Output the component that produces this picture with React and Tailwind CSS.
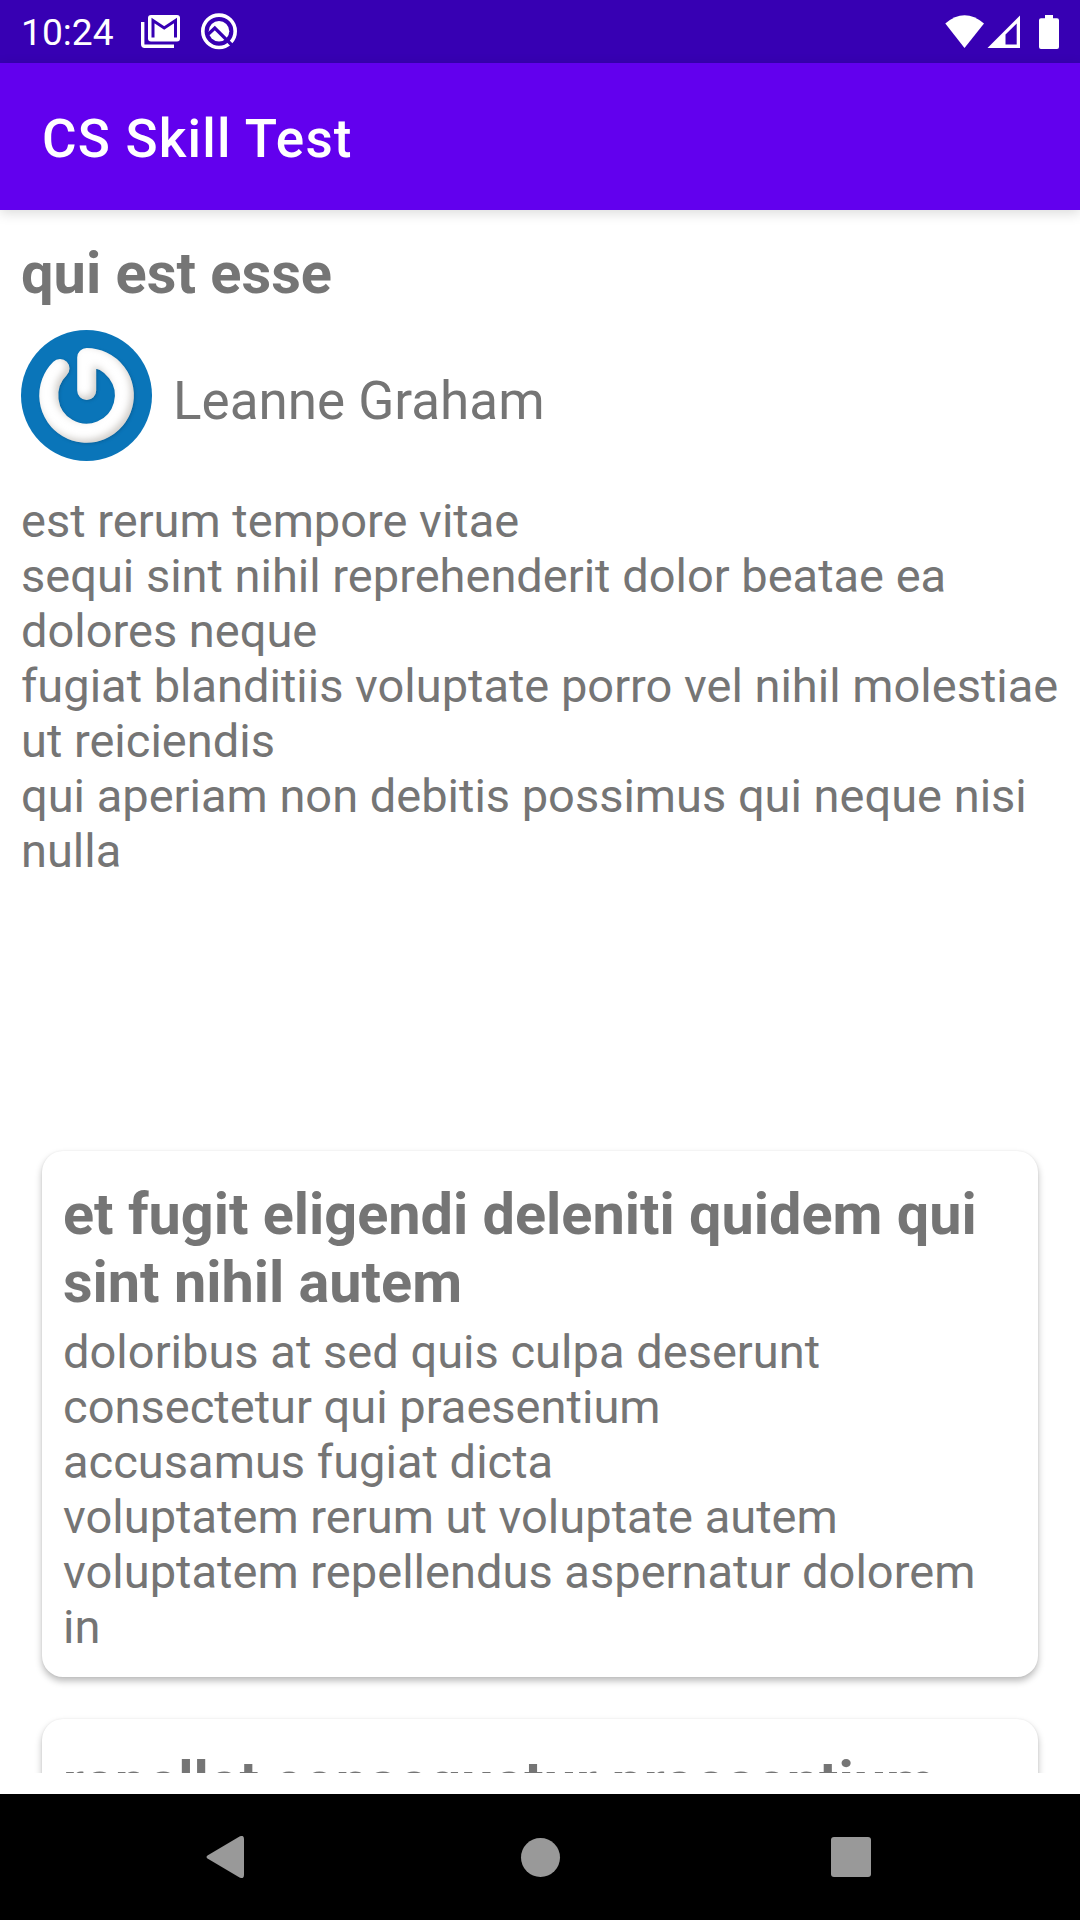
const postLines = [
  'est rerum tempore vitae',
  'sequi sint nihil reprehenderit dolor beatae ea',
  'dolores neque',
  'fugiat blanditiis voluptate porro vel nihil molestiae',
  'ut reiciendis',
  'qui aperiam non debitis possimus qui neque nisi',
  'nulla',
];

const relatedPosts = [
  {
    title: ['et fugit eligendi deleniti quidem qui', 'sint nihil autem'],
    body: [
      'doloribus at sed quis culpa deserunt',
      'consectetur qui praesentium',
      'accusamus fugiat dicta',
      'voluptatem rerum ut voluptate autem',
      'voluptatem repellendus aspernatur dolorem',
      'in',
    ],
  },
  { title: ['repellat consequatur praesentium'], body: [] },
];

function Lines({ lines }) {
  return lines.map((line) => (
    <span key={line} className="block whitespace-nowrap">
      {line}
    </span>
  ));
}

function StatusBar() {
  return (
    <div className="flex h-[63px] shrink-0 items-center bg-[#3700b3] px-[21px] text-white">
      <span className="w-[120px] pt-[2px] text-[37.2px] leading-[43px]">10:24</span>
      <svg className="h-[34px] w-[40px]" viewBox="141 15 40 34">
        <path d="M142.700 22v22.300q0 2 2 2H174" fill="none" stroke="#fff" strokeWidth="3.400" />
        <rect x="148" y="15" width="32" height="26.500" rx="3" fill="#fff" />
        <path d="M153 37.500V20.500l11.200 7.500 11.300-7.500V37.500" fill="none" stroke="#3700b3" strokeWidth="3" />
      </svg>
      <svg className="ml-[20px] h-[37px] w-[37px]" viewBox="201 13 37 37">
        <circle cx="219" cy="31.300" r="16.200" fill="none" stroke="#fff" strokeWidth="3.600" />
        <circle cx="219" cy="31.300" r="10.300" fill="#fff" />
        <path d="M208.500 34l6.300-6 18 18" fill="none" stroke="#3700b3" strokeWidth="3.200" />
      </svg>
      <svg className="ml-auto h-[34px] w-[114px]" viewBox="945 14 114 34" fill="#fff">
        <path d="M945.300 22.500Q964.500 6 984 22.500L964.500 47z" />
        <path fillRule="evenodd" d="M1020 14.500V47h-32.500zM1016.700 22.500L1005.500 33.500V43.500H1016.700z" />
        <path d="M1045 14h8v3.300h4q2 0 2 2V46q0 2-2 2h-16q-2 0-2-2V19.300q0-2 2-2h4z" />
      </svg>
    </div>
  );
}

function Avatar() {
  return (
    <svg className="size-[131px] shrink-0" viewBox="0 0 131 131">
      <defs>
        <filter id="bevel" x="-20%" y="-20%" width="140%" height="140%" colorInterpolationFilters="sRGB">
          <feGaussianBlur in="SourceAlpha" stdDeviation="3.500" result="soft" />
          <feOffset in="soft" dx="-3" dy="-3" result="shifted" />
          <feComposite in="SourceAlpha" in2="shifted" operator="out" result="edge" />
          <feFlood floodColor="#8a8378" floodOpacity="0.4" />
          <feComposite in2="edge" operator="in" result="shade" />
          <feGaussianBlur in="SourceAlpha" stdDeviation="1.500" result="halo" />
          <feOffset in="halo" dx="1" dy="1" result="haloShifted" />
          <feFlood floodColor="#063f68" floodOpacity="0.35" />
          <feComposite in2="haloShifted" operator="in" result="drop" />
          <feMerge>
            <feMergeNode in="drop" />
            <feMergeNode in="SourceGraphic" />
            <feMergeNode in="shade" />
          </feMerge>
        </filter>
      </defs>
      <circle cx="65.500" cy="65.500" r="65.500" fill="#0a75b9" />
      <path
        d="M39 38.500A37.800 37.800 0 1 0 65.700 27.600V60.500"
        fill="none"
        stroke="#fff"
        strokeWidth="19"
        strokeLinecap="round"
        strokeLinejoin="round"
        filter="url(#bevel)"
      />
    </svg>
  );
}

function PostCard({ title, body }) {
  return (
    <article className="min-h-[526px] shrink-0 rounded-[21px] bg-white px-[21px] pb-[22px] pt-[30px] shadow-[0_4px_7px_rgba(0,0,0,0.27),0_0_2px_rgba(0,0,0,0.07)]">
      <h2 className="text-[57.6px] font-bold leading-[68px]">
        <Lines lines={title} />
      </h2>
      <p className="mt-[7px] text-[47.05px] leading-[55px]">
        <Lines lines={body} />
      </p>
    </article>
  );
}

function NavigationBar() {
  return (
    <nav className="flex h-[126px] shrink-0 items-center bg-black pl-[206px] pr-[209px]">
      <div className="flex w-full items-center justify-between">
        <svg className="h-[42px] w-[38px]" viewBox="0 0 38 42">
          <path d="M1.500 19.500L33.500.5Q38-1.500 38 3V39Q38 43.500 33.500 41.500L1.500 22.500Q-.5 21 1.500 19.500z" fill="#999" />
        </svg>
        <div className="mr-[-6px] size-[39px] rounded-full bg-[#999]" />
        <div className="size-[40px] rounded-[3px] bg-[#999]" />
      </div>
    </nav>
  );
}

export default function App() {
  return (
    <div className="flex h-[1920px] w-[1080px] flex-col overflow-hidden bg-white font-['Roboto',sans-serif] text-[#757575]">
      <StatusBar />
      <header className="relative flex h-[147px] shrink-0 items-center bg-[#6200ee] pl-[42px] pt-[5px] shadow-[0_3px_12px_rgba(0,0,0,0.15)]">
        <h1 className="text-[53px] font-medium leading-[62px] tracking-[0.0225em] text-white">CS Skill Test</h1>
      </header>
      <main className="flex h-[1563px] shrink-0 flex-col overflow-hidden">
        <section className="h-[920px] shrink-0 px-[21px] pt-[29px]">
          <h2 className="text-[57.75px] font-bold leading-[68px]">qui est esse</h2>
          <div className="mt-[23px] flex items-center">
            <Avatar />
            <span className="ml-[21px] mt-[10px] text-[53px] leading-[62px]">Leanne Graham</span>
          </div>
          <p className="mt-[32px] text-[47px] leading-[55px]">
            <Lines lines={postLines} />
          </p>
        </section>
        <section className="flex min-h-0 flex-1 flex-col gap-[42px] overflow-hidden px-[42px] pt-[21px]">
          {relatedPosts.map((post) => (
            <PostCard key={post.title[0]} {...post} />
          ))}
        </section>
      </main>
      <div className="h-[21px] shrink-0" />
      <NavigationBar />
    </div>
  );
}
